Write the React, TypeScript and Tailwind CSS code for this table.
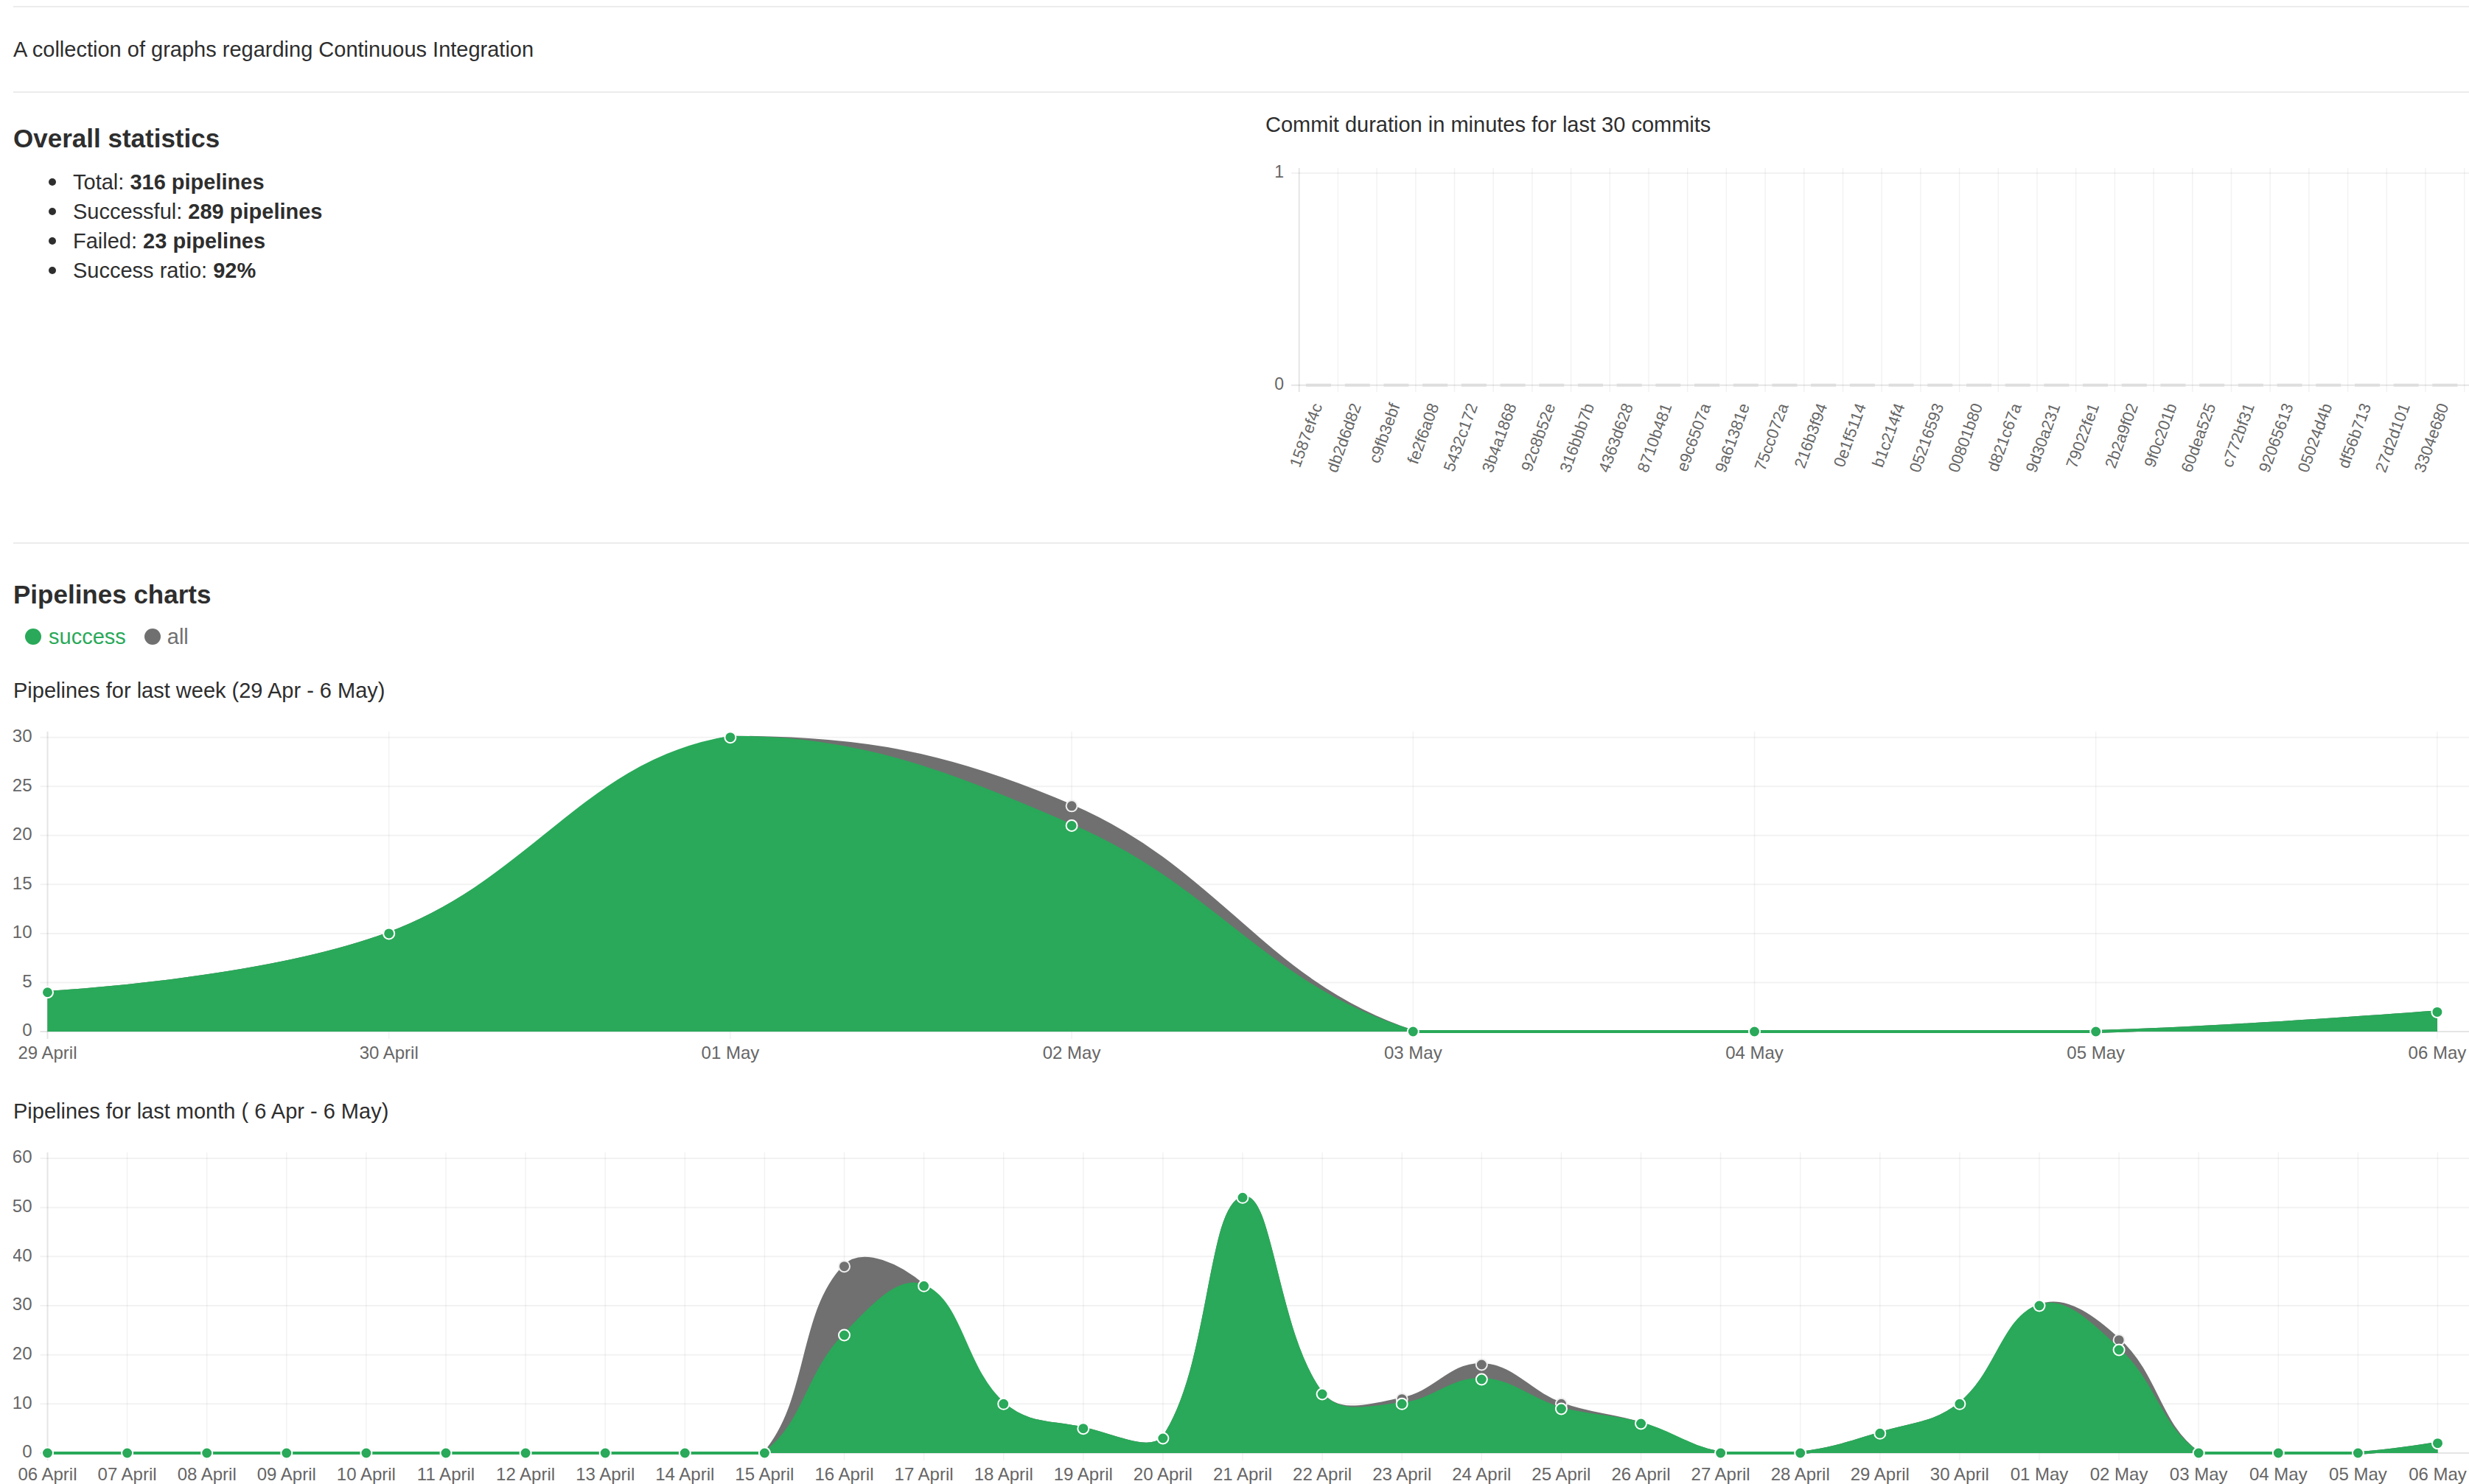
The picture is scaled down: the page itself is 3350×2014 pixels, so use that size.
import React from 'react'

const GREEN = '#29a959'
const GRAY = '#707070'

type Pt = { x: number; y: number }

// Chart.js 1.x style spline control points
function spline(a: Pt, b: Pt, c: Pt, t: number) {
    const d01 = Math.hypot(b.x - a.x, b.y - a.y)
    const d12 = Math.hypot(c.x - b.x, c.y - b.y)
    const fa = (t * d01) / (d01 + d12)
    const fb = (t * d12) / (d01 + d12)
    return {
        inner: { x: b.x - fa * (c.x - a.x), y: b.y - fa * (c.y - a.y) },
        outer: { x: b.x + fb * (c.x - a.x), y: b.y + fb * (c.y - a.y) },
    }
}

function buildPaths(values: number[], x0: number, step: number, top: number, bottom: number, max: number) {
    const pts = values.map((v, i) => ({ x: x0 + i * step, y: bottom - (v / max) * (bottom - top) }))
    const clamp = (y: number) => Math.min(bottom, Math.max(top, y))
    const cps = pts.map((p, i) => {
        const prev = pts[Math.max(i - 1, 0)]
        const next = pts[Math.min(i + 1, pts.length - 1)]
        const t = i > 0 && i < pts.length - 1 ? 0.4 : 0
        const cp = spline(prev, p, next, t)
        cp.inner.y = clamp(cp.inner.y)
        cp.outer.y = clamp(cp.outer.y)
        return cp
    })
    let line = `M${pts[0].x},${pts[0].y}`
    for (let i = 1; i < pts.length; i++) {
        line += ` C${cps[i - 1].outer.x},${cps[i - 1].outer.y} ${cps[i].inner.x},${cps[i].inner.y} ${pts[i].x},${pts[i].y}`
    }
    const last = pts[pts.length - 1]
    const fill = `${line} L${last.x},${bottom} L${pts[0].x},${bottom} Z`
    return { pts, line, fill }
}

type LineChartProps = {
    labels: string[]
    all: number[]
    success: number[]
    max: number
    yStep: number
    height: number
    top: number
    bottom: number
    x0: number
    xStep: number
}

const LineChart = ({ labels, all, success, max, yStep, height, top, bottom, x0, xStep }: LineChartProps) => {
    const width = 3332
    const ticks = Array.from({ length: max / yStep + 1 }, (_, i) => i * yStep)
    const allPaths = buildPaths(all, x0, xStep, top, bottom, max)
    const okPaths = buildPaths(success, x0, xStep, top, bottom, max)
    const yOf = (v: number) => bottom - (v / max) * (bottom - top)

    return (
        <svg width={width} height={height} className="block" fontFamily="'Liberation Sans', Arial, sans-serif">
            {/* horizontal grid */}
            {ticks.map((v) => (
                <g key={v}>
                    <line x1={x0 - 10} x2={width} y1={yOf(v)} y2={yOf(v)} stroke={v === 0 ? 'rgba(0,0,0,0.1)' : 'rgba(0,0,0,0.05)'} strokeWidth={2} />
                    <text x={x0 - 21} y={yOf(v)} textAnchor="end" dominantBaseline="middle" fontSize={24} fill="#666">{v}</text>
                </g>
            ))}
            {/* vertical grid + labels */}
            {labels.map((l, i) => (
                <g key={l}>
                    <line x1={x0 + i * xStep} x2={x0 + i * xStep} y1={top - 8} y2={bottom + 10} stroke={i === 0 ? 'rgba(0,0,0,0.1)' : 'rgba(0,0,0,0.05)'} strokeWidth={i === 0 ? 2 : 1.5} />
                    <text x={x0 + i * xStep} y={bottom + 31} textAnchor="middle" dominantBaseline="middle" fontSize={24} fill="#666">{l}</text>
                </g>
            ))}
            {/* all pipelines */}
            <path d={allPaths.fill} fill={GRAY} />
            <path d={allPaths.line} fill="none" stroke={GRAY} strokeWidth={4} />
            {allPaths.pts.map((p, i) => (
                <circle key={i} cx={p.x} cy={p.y} r={7.5} fill={GRAY} stroke="#eee" strokeWidth={2} />
            ))}
            {/* successful pipelines */}
            <path d={okPaths.fill} fill={GREEN} />
            <path d={okPaths.line} fill="none" stroke={GREEN} strokeWidth={4} />
            {okPaths.pts.map((p, i) => (
                <circle key={i} cx={p.x} cy={p.y} r={7.5} fill={GREEN} stroke="#fff" strokeWidth={2} />
            ))}
        </svg>
    )
}

const commits = [
    '1587ef4c', 'db2d6d82', 'c9fb3ebf', 'fe2f6a08', '5432c172', '3b4a1868', '92c8b52e', '316bbb7b',
    '4363d628', '8710b481', 'e9c6507a', '9a61381e', '75cc072a', '216b3f94', '0e1f5114', 'b1c214f4',
    '05216593', '00801b80', 'd821c67a', '9d30a231', '79022fe1', '2b2a9f02', '9f0c201b', '60dea525',
    'c772bf31', '92065613', '05024d4b', 'df56b713', '27d2d101', '3304e680',
]

const CommitChart = () => {
    const x0 = 78.7
    const step = 52.7
    const y1 = 35
    const y0 = 322.7
    return (
        <svg width={1666} height={470} className="block" fontFamily="'Liberation Sans', Arial, sans-serif">
            <line x1={68} x2={1666} y1={y1} y2={y1} stroke="rgba(0,0,0,0.05)" strokeWidth={2} />
            <text x={58} y={y1} textAnchor="end" dominantBaseline="middle" fontSize={23} fill="#666">1</text>
            <text x={58} y={y0} textAnchor="end" dominantBaseline="middle" fontSize={23} fill="#666">0</text>
            {Array.from({ length: 31 }).map((_, i) => (
                <line key={i} x1={x0 + i * step} x2={x0 + i * step} y1={28} y2={332} stroke={i === 0 ? 'rgba(0,0,0,0.1)' : 'rgba(0,0,0,0.05)'} strokeWidth={i === 0 ? 2 : 1.5} />
            ))}
            <line x1={68} x2={1666} y1={y0} y2={y0} stroke="rgba(0,0,0,0.1)" strokeWidth={2} />
            {commits.map((c, i) => {
                const cx = x0 + step / 2 + i * step
                return (
                    <g key={c}>
                        <rect x={cx - 17} y={y0 - 2} width={34} height={4} fill="#dedede" />
                        <text x={cx} y={y0 + 26} textAnchor="end" dominantBaseline="middle" fontSize={22} fill="#666" transform={`rotate(-70 ${cx} ${y0 + 26})`}>{c}</text>
                    </g>
                )
            })}
        </svg>
    )
}

const weekLabels = ['29 April', '30 April', '01 May', '02 May', '03 May', '04 May', '05 May', '06 May']
const weekAll = [4, 10, 30, 23, 0, 0, 0, 2]
const weekSuccess = [4, 10, 30, 21, 0, 0, 0, 2]

const monthLabels = [
    ...Array.from({ length: 25 }, (_, i) => `${String(i + 6).padStart(2, '0')} April`),
    ...Array.from({ length: 6 }, (_, i) => `${String(i + 1).padStart(2, '0')} May`),
]
const monthAll = [0, 0, 0, 0, 0, 0, 0, 0, 0, 0, 38, 34, 10, 5, 3, 52, 12, 11, 18, 10, 6, 0, 0, 4, 10, 30, 23, 0, 0, 0, 2]
const monthSuccess = [0, 0, 0, 0, 0, 0, 0, 0, 0, 0, 24, 34, 10, 5, 3, 52, 12, 10, 15, 9, 6, 0, 0, 4, 10, 30, 21, 0, 0, 0, 2]

const stats = [
    { label: 'Total:', value: '316 pipelines' },
    { label: 'Successful:', value: '289 pipelines' },
    { label: 'Failed:', value: '23 pipelines' },
    { label: 'Success ratio:', value: '92%' },
]

export default function App() {
    return (
        <div className="w-[3350px] h-[2014px] overflow-hidden bg-white pl-[18px] pt-[8px] text-[#2e2e2e] font-['Liberation_Sans',Arial,sans-serif]">
            {/* Intro */}
            <div className="border-y-2 border-[#ececec]">
                <p className="py-[37px] text-[29px] leading-[40px]">A collection of graphs regarding Continuous Integration</p>
            </div>

            {/* Overall statistics + commit durations */}
            <div className="grid grid-cols-2 h-[612px] border-b-2 border-[#ececec]">
                <div>
                    <h4 className="mt-[40px] text-[35px] leading-[44px] font-bold">Overall statistics</h4>
                    <ul className="mt-[17px] text-[29px] leading-[40px]">
                        {stats.map((s) => (
                            <li key={s.label} className="flex items-center">
                                <span className="ml-[48px] mr-[23px] w-[10px] h-[10px] rounded-full bg-[#2e2e2e]"></span>
                                <span>{s.label} <strong className="font-bold">{s.value}</strong></span>
                            </li>
                        ))}
                    </ul>
                </div>
                <div>
                    <p className="mt-[23px] pl-[33px] text-[29px] leading-[40px]">Commit duration in minutes for last 30 commits</p>
                    <div className="mt-[11px]">
                        <CommitChart />
                    </div>
                </div>
            </div>

            {/* Pipelines charts */}
            <h4 className="mt-[47px] text-[35px] leading-[44px] font-bold">Pipelines charts</h4>
            <div className="mt-[15px] flex items-center text-[29px] leading-[40px]">
                <span className="ml-[16px] w-[22px] h-[22px] rounded-full bg-[#29a959]"></span>
                <span className="ml-[10px] text-[#29a959]">success</span>
                <span className="ml-[25px] w-[22px] h-[22px] rounded-full bg-[#707070]"></span>
                <span className="ml-[9px] text-[#707070]">all</span>
            </div>

            <p className="mt-[33px] text-[29px] leading-[40px]">Pipelines for last week (29 Apr - 6 May)</p>
            <div className="mt-[23px]">
                <LineChart labels={weekLabels} all={weekAll} success={weekSuccess} max={30} yStep={5} height={470} top={20.7} bottom={420} x0={46.5} xStep={463.2} />
            </div>

            <p className="mt-[38px] text-[29px] leading-[40px]">Pipelines for last month ( 6 Apr - 6 May)</p>
            <div className="mt-[24px]">
                <LineChart labels={monthLabels} all={monthAll} success={monthSuccess} max={60} yStep={10} height={462} top={20} bottom={420} x0={46.5} xStep={108.1} />
            </div>
        </div>
    )
}
